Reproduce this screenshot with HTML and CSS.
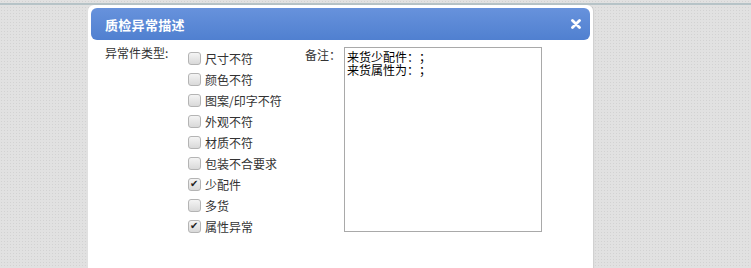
FILE: index.html
```html
<!DOCTYPE html>
<html lang="zh">
<head>
<meta charset="utf-8">
<title>质检异常描述</title>
<link rel="stylesheet" href="styles.css">
</head>
<body>
<div class="topbar"></div>
<div class="dialog">
  <div class="dialog-header">
    <span class="dialog-title">质检异常描述</span>
    <span class="dialog-close" aria-label="关闭">
      <svg width="10" height="10" viewBox="0 0 10 10"><path d="M1.5 1.5 L8.5 8.5 M8.5 1.5 L1.5 8.5" stroke="#fff" stroke-width="2.8" stroke-linecap="round"/></svg>
    </span>
  </div>
  <div class="dialog-body">
    <div class="field-label type-label">异常件类型:</div>
    <ul class="check-list">
      <li><span class="cb"></span>尺寸不符</li>
      <li><span class="cb"></span>颜色不符</li>
      <li><span class="cb"></span>图案/印字不符</li>
      <li><span class="cb"></span>外观不符</li>
      <li><span class="cb"></span>材质不符</li>
      <li><span class="cb"></span>包装不合要求</li>
      <li><span class="cb checked"></span>少配件</li>
      <li><span class="cb"></span>多货</li>
      <li><span class="cb checked"></span>属性异常</li>
    </ul>
    <div class="field-label note-label">备注：</div>
    <textarea class="note">来货少配件：；
来货属性为：；</textarea>
  </div>
</div>
</body>
</html>
```

FILE: styles.css
```css
html, body {
  margin: 0;
  padding: 0;
}
body {
  height: 268px;
  overflow: hidden;
  background-color: #e1e1e1;
  background-image: radial-gradient(circle, #d2d2d2 0.7px, transparent 0.8px);
  background-size: 3px 3px;
  font-family: "Noto Sans CJK SC", "Noto Sans", sans-serif;
  font-size: 12px;
  color: #333;
  text-spacing-trim: space-all;
}
.topbar {
  height: 3px;
  border-bottom: 2px solid #b6c3c7;
}
.dialog {
  margin-left: 88px;
  width: 505px;
  height: 270px;
  box-sizing: border-box;
  background: #fff;
  border-radius: 6px 6px 0 0;
  padding: 3px 3px 0 3px;
  box-shadow: 1px 0 1px rgba(0,0,0,0.08);
}
.dialog-header {
  height: 32px;
  border-radius: 6px;
  background: linear-gradient(#6792dc, #5080d0);
  display: flex;
  align-items: center;
  justify-content: space-between;
  padding: 0 9px 0 14px;
}
.dialog-title {
  color: #fff;
  font-weight: bold;
  font-size: 13px;
  letter-spacing: 0.3px;
}
.dialog-close {
  display: flex;
  width: 10px;
  height: 10px;
}
.dialog-body {
  display: flex;
  align-items: flex-start;
  padding: 7px 0 0 14px;
}
.field-label {
  color: #333;
  line-height: 14px;
}
.type-label {
  width: 83px;
  margin-top: -1px;
}
.check-list {
  list-style: none;
  margin: 0;
  padding: 0;
  width: 117px;
}
.check-list li {
  display: flex;
  align-items: center;
  height: 21px;
  color: #333;
}
.check-list li:first-child {
  margin-top: 1px;
}
.cb {
  position: relative;
  width: 11px;
  height: 11px;
  border: 1px solid #b4b4b4;
  border-radius: 3px;
  background: linear-gradient(#f4f4f4, #d9d9d9);
  margin-right: 4px;
  flex: none;
}
.cb.checked::after {
  content: "✔";
  position: absolute;
  left: 1px;
  top: -2px;
  font-size: 10px;
  line-height: 14px;
  color: #222;
  font-family: "DejaVu Sans", sans-serif;
}
.note-label {
  width: 39px;
  margin-top: 1px;
}
.note {
  width: 198px;
  height: 185px;
  box-sizing: border-box;
  border: 1px solid #a9a9a9;
  padding: 2px 2px;
  margin: 0;
  resize: none;
  font-family: "Noto Sans CJK SC", sans-serif;
  font-size: 12px;
  line-height: 13px;
  color: #000;
  background: #fff;
  outline: none;
  text-spacing-trim: space-all;
}
```
